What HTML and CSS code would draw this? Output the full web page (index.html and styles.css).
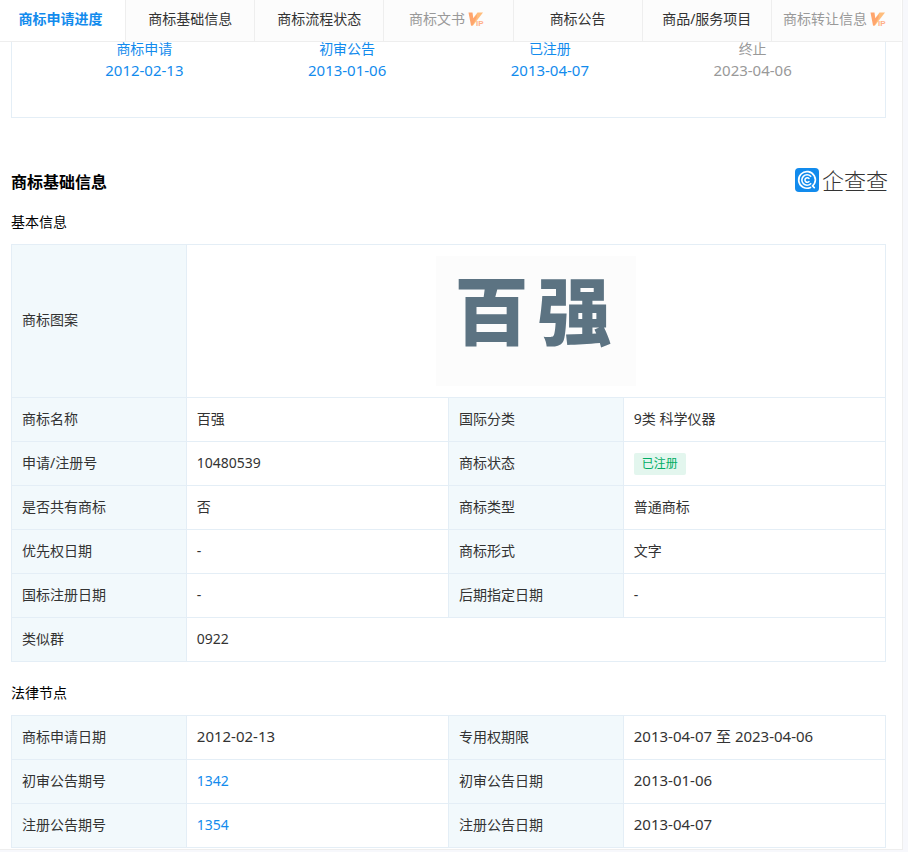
FILE: index.html
```html
<!DOCTYPE html>
<html lang="zh-CN">
<head>
<meta charset="utf-8">
<meta name="viewport" content="width=device-width, initial-scale=1">
<title>商标详情</title>
<link rel="stylesheet" href="styles.css">
</head>
<body>
<svg class="defs" aria-hidden="true">
  <defs>
    <symbol id="vip" viewBox="0 0 16 16">
      <path fill="#ffbd7c" d="M9.5 1.500H15L5 14.500H3L4.600 8Z"/>
      <path fill="#ffa56c" d="M0.500 1.500H4.500L5.300 7.500L9 3.500L8.500 7L4.500 14.500H3Z"/>
      <text x="8" y="14.500" font-family="Liberation Sans, sans-serif" font-size="8" font-weight="700" fill="#ffb088">IP</text>
    </symbol>
  </defs>
</svg>
<main class="page">
  <nav class="tabs" aria-label="商标导航">
    <a class="tab tab-active" href="#progress">商标申请进度</a>
    <a class="tab" href="#basic">商标基础信息</a>
    <a class="tab" href="#flow">商标流程状态</a>
    <a class="tab tab-vip" href="#docs">商标文书<svg class="vip"><use href="#vip"/></svg></a>
    <a class="tab" href="#notice">商标公告</a>
    <a class="tab" href="#goods">商品/服务项目</a>
    <a class="tab tab-vip" href="#transfer">商标转让信息<svg class="vip"><use href="#vip"/></svg></a>
  </nav>

  <ol class="progress" id="progress">
    <li class="step">商标申请<time class="date">2012-02-13</time></li>
    <li class="step">初审公告<time class="date">2013-01-06</time></li>
    <li class="step">已注册<time class="date">2013-04-07</time></li>
    <li class="step step-end">终止<time class="date">2023-04-06</time></li>
  </ol>

  <section class="content" id="basic">
    <header class="section-head">
      <h2 class="title">商标基础信息</h2>
      <div class="brand">
        <svg class="brand-icon" viewBox="0 0 24 24" aria-hidden="true">
          <rect width="24" height="24" rx="4" fill="#128bed"/>
          <g fill="none" stroke="#fff" stroke-linecap="round">
            <path stroke-width="1.700" d="M15.500 19.400A8.300 8.300 0 1 1 19.500 15.400L17.600 18L19.300 19.700"/>
            <path stroke-width="1.600" d="M15.700 8.300A5.200 5.200 0 1 0 15.700 15.700"/>
            <path stroke-width="1.500" d="M14 10.500A2.300 2.300 0 1 0 14 13.500"/>
          </g>
        </svg>
        <span class="brand-name">企查查</span>
      </div>
    </header>

    <h3 class="subtitle">基本信息</h3>
    <table class="info">
      <colgroup><col class="col-key"><col class="col-value"><col class="col-key"><col class="col-value"></colgroup>
      <tbody>
        <tr>
          <th scope="row">商标图案</th>
          <td class="mark-cell" colspan="3"><div class="mark"><span>百</span><span>强</span></div></td>
        </tr>
        <tr><th scope="row">商标名称</th><td>百强</td><th scope="row">国际分类</th><td>9类 科学仪器</td></tr>
        <tr><th scope="row">申请/注册号</th><td>10480539</td><th scope="row">商标状态</th><td><span class="badge">已注册</span></td></tr>
        <tr><th scope="row">是否共有商标</th><td>否</td><th scope="row">商标类型</th><td>普通商标</td></tr>
        <tr><th scope="row">优先权日期</th><td>-</td><th scope="row">商标形式</th><td>文字</td></tr>
        <tr><th scope="row">国标注册日期</th><td>-</td><th scope="row">后期指定日期</th><td>-</td></tr>
        <tr><th scope="row">类似群</th><td colspan="3">0922</td></tr>
      </tbody>
    </table>

    <h3 class="subtitle subtitle-next">法律节点</h3>
    <table class="info">
      <colgroup><col class="col-key"><col class="col-value"><col class="col-key"><col class="col-value"></colgroup>
      <tbody>
        <tr><th scope="row">商标申请日期</th><td class="date">2012-02-13</td><th scope="row">专用权期限</th><td class="date">2013-04-07 至 2023-04-06</td></tr>
        <tr><th scope="row">初审公告期号</th><td><a class="link" href="#n1342">1342</a></td><th scope="row">初审公告日期</th><td class="date">2013-01-06</td></tr>
        <tr><th scope="row">注册公告期号</th><td><a class="link" href="#n1354">1354</a></td><th scope="row">注册公告日期</th><td class="date">2013-04-07</td></tr>
      </tbody>
    </table>
  </section>
</main>
</body>
</html>
```
FILE: styles.css
```css
* {
  box-sizing: border-box;
}

body {
  margin: 0;
  background: #f7f8fc;
  color: #333;
  font: 14px/22px "Noto Sans", "Noto Sans CJK SC", sans-serif;
}

a {
  color: inherit;
  text-decoration: none;
}

.defs {
  position: absolute;
  width: 0;
  height: 0;
}

.page {
  margin-right: 5px;
  padding-bottom: 1px;
  background: #fff;
  border-right: 1px solid #eee;
  border-bottom: 1px solid #eee;
}

.tabs {
  position: sticky;
  top: 0;
  z-index: 1;
  display: grid;
  grid-template-columns: 126fr repeat(6, 129fr);
  padding-right: 1px;
  background: #fff;
  border-bottom: 1px solid #eee;
}

.tab {
  display: flex;
  justify-content: center;
  align-items: center;
  padding: 8px 0 11px;
  background: #fcfcfc;
  border-right: 1px solid #eee;
  white-space: nowrap;
}

.tab:last-child {
  border-right: 0;
}

.tab-active {
  padding-right: 4px;
  background: #fff;
  color: #128bed;
  font-weight: 700;
}

.tab-vip {
  color: #999;
}

.vip {
  width: 16px;
  height: 16px;
  margin: 0 4px 0 3px;
}

.progress {
  display: grid;
  grid-template-columns: repeat(4, 1fr);
  margin: -4px 16px 0 11px;
  padding: 0 31px 35px;
  border: 1px solid #e4eef6;
  border-top: 0;
  list-style: none;
}

.step {
  display: flex;
  flex-direction: column;
  color: #128bed;
  text-align: center;
}

.step-end {
  color: #999;
}

.date {
  font-size: 15px;
}

.step .date {
  line-height: 20px;
  padding-bottom: 2px;
}

.content {
  padding: 48px 16px 0 11px;
}

.section-head {
  display: flex;
  justify-content: space-between;
  align-items: center;
}

.title {
  margin: 0;
  padding-top: 5px;
  color: #000;
  font-size: 16px;
  font-weight: 700;
}

.brand {
  display: flex;
  align-items: center;
  gap: 3px;
  margin-right: -2px;
}

.brand-icon {
  width: 24px;
  height: 24px;
}

.brand-name {
  padding-bottom: 2px;
  font-family: "Noto Sans CJK SC", sans-serif;
  font-size: 22px;
  font-weight: 300;
}

.subtitle {
  margin: 18px 0 11px;
  color: #000;
  font-size: 14px;
  font-weight: 400;
}

.subtitle-next {
  margin-top: 20px;
}

.info {
  width: 100%;
  table-layout: fixed;
  border-collapse: collapse;
}

.col-key {
  width: 20%;
}

.col-value {
  width: 30%;
}

.info th,
.info td {
  height: 44px;
  padding: 9px 10px 11px;
  border: 1px solid #e4eef6;
  font-weight: 400;
  text-align: left;
}

.info .date {
  padding-top: 8px;
  padding-bottom: 12px;
}

.info th {
  background: #f2f9fc;
}

.info .mark-cell {
  padding: 11px 10px;
}

.mark {
  display: flex;
  justify-content: center;
  gap: 9px;
  width: 200px;
  margin: 0 auto;
  padding: 0 6px 28px 0;
  background: #fcfcfc;
  color: #5c7382;
  font: 900 74px/102px "Noto Sans CJK SC", sans-serif;
}

.badge {
  display: block;
  width: max-content;
  margin-top: 1px;
  margin-bottom: -1px;
  padding: 0 8px;
  background: #e3f6ee;
  border-radius: 2px;
  color: #00ad65;
  font-size: 12px;
}

.link {
  color: #128bed;
}
```
